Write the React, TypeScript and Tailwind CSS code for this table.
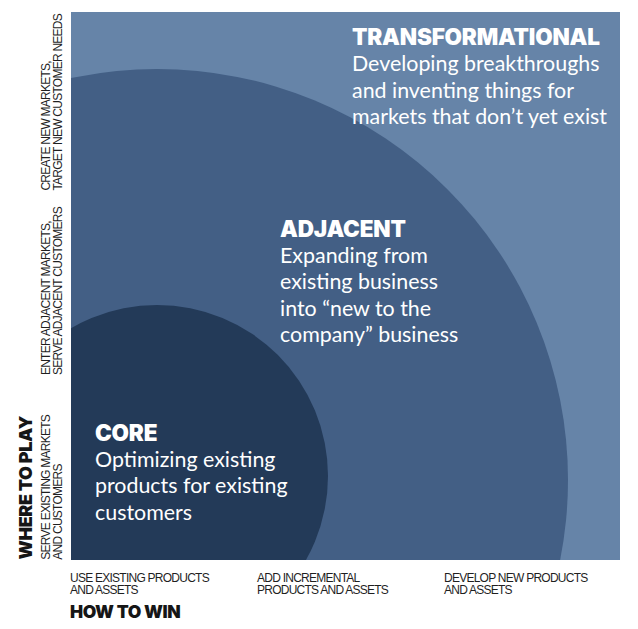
import React from "react";

const heading = "font-['Inter','Liberation_Sans',sans-serif] font-black text-white text-[22.5px] leading-[24px] tracking-[-0.2px]";
const body = "font-['Lato','Noto_Sans',sans-serif] text-white text-[21.4px] leading-[26.5px] mt-[1px]";
const axis = "font-['Liberation_Sans','Arial',sans-serif] text-[12px] leading-[12px] tracking-[-0.75px] text-[#1f1f1f] uppercase whitespace-nowrap";
const vert = "[writing-mode:vertical-rl] rotate-180";

function Block({ title, lines, className }: { title: string; lines: string[]; className: string }) {
  return (
    <div className={className}>
      <div className={heading}>{title}</div>
      <div className={body}>
        {lines.map((l) => (
          <div key={l} className="whitespace-nowrap">{l}</div>
        ))}
      </div>
    </div>
  );
}

export default function App() {
  return (
    <div className="w-[638px] h-[629px] bg-white overflow-hidden pt-[12px]">
      <div className="flex">
        {/* left axis */}
        <div className="w-[71px] h-[548px] grid grid-rows-3">
          <div className="flex justify-end items-end pr-[7px] pb-[4px] min-h-0">
            <div className={`${vert} ${axis}`}>
              <div>Create new markets,</div>
              <div>Target new customer needs</div>
            </div>
          </div>
          <div className="flex justify-end items-end pr-[7px] pb-[2px] min-h-0">
            <div className={`${vert} ${axis}`}>
              <div>Enter adjacent markets,</div>
              <div>Serve adjacent customers</div>
            </div>
          </div>
          <div className="flex justify-end items-end pr-[7px] gap-[4px] min-h-0">
            <div className={`${vert} font-['Inter','Liberation_Sans',sans-serif] font-black text-[18px] leading-[20px] tracking-[-0.4px] text-[#161616] whitespace-nowrap`}>
              WHERE TO PLAY
            </div>
            <div className={`${vert} ${axis}`}>
              <div>Serve existing markets</div>
              <div>and customers</div>
            </div>
          </div>
        </div>

        {/* chart */}
        <div className="relative w-[549px] h-[548px] overflow-hidden">
          <svg className="absolute inset-0" width="549" height="548" viewBox="0 0 549 548">
            <rect x="0" y="0" width="549" height="548" fill="#6684a8" />
            <circle cx="86" cy="468" r="411" fill="#435f85" />
            <circle cx="86" cy="464" r="171" fill="#233a58" />
          </svg>
          <div className="relative flex flex-col pt-[13px]">
            <Block
              className="ml-[281px]"
              title="TRANSFORMATIONAL"
              lines={["Developing breakthroughs", "and inventing things for", "markets that don’t yet exist"]}
            />
            <Block
              className="ml-[209px] mt-[87px]"
              title="ADJACENT"
              lines={["Expanding from", "existing business", "into “new to the", "company” business"]}
            />
            <Block
              className="ml-[24px] mt-[73px]"
              title="CORE"
              lines={["Optimizing existing", "products for existing", "customers"]}
            />
          </div>
        </div>
      </div>

      {/* bottom axis */}
      <div className="ml-[70px] mt-[12px] flex">
        <div className={`w-[187px] ${axis}`}>
          <div>Use existing products</div>
          <div>and assets</div>
        </div>
        <div className={`w-[187px] ${axis}`}>
          <div>Add incremental</div>
          <div>products and assets</div>
        </div>
        <div className={`w-[187px] ${axis}`}>
          <div>Develop new products</div>
          <div>and assets</div>
        </div>
      </div>
      <div className="ml-[70px] mt-[6px] font-['Inter','Liberation_Sans',sans-serif] font-black text-[17.5px] leading-[20px] tracking-[-0.4px] text-[#161616]">
        HOW TO WIN
      </div>
    </div>
  );
}
